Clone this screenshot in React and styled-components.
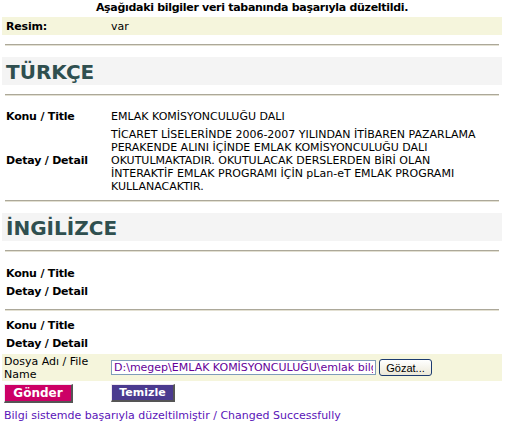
import React from 'react'
import styled, { createGlobalStyle } from 'styled-components'

const GlobalStyle = createGlobalStyle`
  body {
    margin: 0;
    background: #fff;
    font-family: "DejaVu Sans", Verdana, sans-serif;
    font-size: 11px;
    color: #000;
  }
`

const Page = styled.div`
  width: 500px;
  padding: 0 2px;
`

const Notice = styled.div`
  text-align: center;
  font-weight: bold;
  letter-spacing: -0.3px;
  height: 17px;
  line-height: 16px;
`

const Row = styled.div`
  display: grid;
  grid-template-columns: 109px 1fr;
  align-items: center;
  min-height: 18px;
  background: ${p => (p.shaded ? '#f5f5dc' : 'transparent')};
  margin-top: ${p => p.gap || 0}px;
`

const Label = styled.div`
  font-weight: ${p => (p.light ? 'normal' : 'bold')};
  letter-spacing: ${p => (p.light ? 0 : -0.2)}px;
  padding-left: ${p => (p.light ? 2 : 4)}px;
  line-height: 13px;
`

const Value = styled.div`
  line-height: 13px;
  padding: ${p => (p.pad ? '3px 0' : '0')};
  max-width: 372px;
`

const Rule = styled.div`
  margin: ${p => p.top}px 3px ${p => p.bottom}px;
  height: 0;
  border-top: 1px solid #aca899;
  border-bottom: 1px solid #e3e0d2;
`

const Heading = styled.h2`
  margin: 0;
  height: 28px;
  line-height: 30px;
  background: #f4f4f4;
  color: #2f4f4f;
  font-size: 20px;
  font-weight: bold;
  padding-left: 4px;
`

const FileRow = styled(Row)`
  height: 27px;
`

const FileField = styled.div`
  display: flex;
  align-items: center;
  gap: 3px;
`

const PathInput = styled.input`
  width: 259px;
  height: 13px;
  padding: 0 2px;
  border: 1px solid #7f9db9;
  font-family: "DejaVu Sans", Verdana, sans-serif;
  font-size: 11px;
  color: #660099;
  background: #fff;
  outline: none;
`

const Browse = styled.button`
  height: 17px;
  width: 53px;
  padding: 0;
  border: 1px solid #1c3b70;
  border-radius: 3px;
  background: linear-gradient(#fff, #ece9d8);
  font-family: "Liberation Sans", Arial, sans-serif;
  font-size: 11px;
  color: #000;
`

const Actions = styled.div`
  display: grid;
  grid-template-columns: 107px auto;
  align-items: start;
  margin-top: 3px;
  padding-left: 2px;
`

const ActionButton = styled.button`
  justify-self: start;
  height: ${p => p.h}px;
  width: ${p => p.w}px;
  padding: 0;
  background: ${p => p.bg};
  color: #fff;
  font-family: "DejaVu Sans", Verdana, sans-serif;
  font-weight: bold;
  font-size: ${p => p.size}px;
  border: solid;
  border-color: #f0e8f0 #555 #555 #f0e8f0;
  border-width: 1px 2px 2px 1px;
`

const Done = styled.div`
  margin-top: 6px;
  padding-left: 2px;
  color: #5a14b8;
  line-height: 14px;
`

export default function App() {
  return (
    <Page>
      <GlobalStyle />
      <Notice>Aşağıdaki bilgiler veri tabanında başarıyla düzeltildi.</Notice>
      <Row shaded>
        <Label>Resim:</Label>
        <Value>var</Value>
      </Row>
      <Rule top={9} bottom={11} />
      <Heading>TÜRKÇE</Heading>
      <Rule top={9} bottom={11} />
      <Row>
        <Label>Konu / Title</Label>
        <Value>EMLAK KOMİSYONCULUĞU DALI</Value>
      </Row>
      <Row>
        <Label>Detay / Detail</Label>
        <Value pad>
          TİCARET LİSELERİNDE 2006-2007 YILINDAN İTİBAREN PAZARLAMA PERAKENDE ALINI İÇİNDE EMLAK
          KOMİSYONCULUĞU DALI OKUTULMAKTADIR. OKUTULACAK DERSLERDEN BİRİ OLAN İNTERAKTİF EMLAK
          PROGRAMI İÇİN pLan-eT EMLAK PROGRAMI KULLANACAKTIR.
        </Value>
      </Row>
      <Rule top={4} bottom={11} />
      <Heading>İNGİLİZCE</Heading>
      <Rule top={9} bottom={12} />
      <Row>
        <Label>Konu / Title</Label>
        <Value />
      </Row>
      <Row>
        <Label>Detay / Detail</Label>
        <Value />
      </Row>
      <Rule top={9} bottom={5} />
      <Row>
        <Label>Konu / Title</Label>
        <Value />
      </Row>
      <Row>
        <Label>Detay / Detail</Label>
        <Value />
      </Row>
      <FileRow shaded gap={2}>
        <Label light>Dosya Adı / File Name</Label>
        <FileField>
          <PathInput readOnly value="D:\megep\EMLAK KOMİSYONCULUĞU\emlak bilgi.doc" />
          <Browse>Gözat...</Browse>
        </FileField>
      </FileRow>
      <Actions>
        <ActionButton bg="#cc0066" w={69} h={19} size={12}>Gönder</ActionButton>
        <ActionButton bg="#4b3a8f" w={64} h={18} size={11}>Temizle</ActionButton>
      </Actions>
      <Done>Bilgi sistemde başarıyla düzeltilmiştir / Changed Successfully</Done>
    </Page>
  )
}
